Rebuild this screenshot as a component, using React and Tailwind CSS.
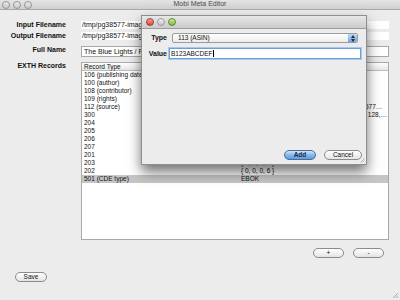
const records = [
  ["106 (publishing date)", "2012-01-19"],
  ["100 (author)", "Ronald Firbank"],
  ["108 (contributor)", "calibre (0.8.34) [http://calibre-ebook.com]"],
  ["109 (rights)", "Public domain in the USA."],
  ["112 (source)", "http://www.gutenberg.org/ebooks/38577/38577mobi"],
  ["300", "{ 0, 0, 0, 1, 0, 0, 0, 0, 0, 0, 0, 0, 0, 0, 0, 0, 0, 128, 0, 0, 0, 0 }"],
  ["204", "{ 0, 0, 0, 201 }"],
  ["205", "{ 0, 0, 0, 0 }"],
  ["206", "{ 0, 0, 0, 1 }"],
  ["207", "{ 0, 0, 0, 0 }"],
  ["201", "{ 0, 0, 0, 0 }"],
  ["203", "{ 0, 0, 0, 0 }"],
  ["202", "{ 0, 0, 0, 6 }"],
  ["501 (CDE type)", "EBOK"],
];

const Light = ({ className }) => (
  <span className={`block w-[8px] h-[8px] rounded-full border ${className}`} />
);

const AquaButton = ({ children, primary, className = "" }) => (
  <button
    className={`h-[10px] rounded-full border text-[6.5px] leading-[8px] flex items-center justify-center ${
      primary
        ? "border-[#4a6c9b] bg-gradient-to-b from-[#d3e6fa] via-[#86b8ec] to-[#5c9be0] font-bold text-[#1a2a40]"
        : "border-[#8a8a8a] bg-gradient-to-b from-[#ffffff] to-[#e4e4e4] text-[#111]"
    } ${className}`}
  >
    {children}
  </button>
);

export default function App() {
  return (
    <div
      className="relative w-[400px] h-[300px] overflow-hidden bg-[#ececec] text-[#111]"
      style={{ fontFamily: '"Liberation Sans", Arial, sans-serif' }}
    >
      {/* Main window title bar */}
      <div className="relative h-[10px] bg-gradient-to-b from-[#e4e4e4] to-[#d0d0d0] border-b border-[#a9a9a9] flex items-center">
        <div className="flex gap-[3px] pl-[2px]">
          <Light className="border-[#959595] bg-gradient-to-b from-[#ececec] to-[#c8c8c8]" />
          <Light className="border-[#959595] bg-gradient-to-b from-[#ececec] to-[#c8c8c8]" />
          <Light className="border-[#959595] bg-gradient-to-b from-[#ececec] to-[#c8c8c8]" />
        </div>
        <div className="absolute inset-0 flex items-center justify-center text-[7px] text-[#4a4a4a]">
          Mobi Meta Editor
        </div>
      </div>

      {/* Form */}
      <div className="flex mt-[11px] h-[8px] items-center">
        <div className="w-[66px] text-right font-bold text-[7px] leading-[8px]">Input Filename</div>
        <div className="ml-[15px] mr-[11px] flex-1 h-[8px] bg-white text-[7px] leading-[8px] pl-[1px] overflow-hidden whitespace-nowrap">
          /tmp/pg38577-images.epub
        </div>
      </div>
      <div className="flex mt-[3px] h-[8px] items-center">
        <div className="w-[66px] text-right font-bold text-[7px] leading-[8px]">Output Filename</div>
        <div className="ml-[15px] mr-[11px] flex-1 h-[8px] bg-white text-[7px] leading-[8px] pl-[1px] overflow-hidden whitespace-nowrap">
          /tmp/pg38577-images.mobi
        </div>
      </div>
      <div className="flex mt-[6px] h-[11px] items-start">
        <div className="w-[66px] text-right font-bold text-[7px] leading-[7px]">Full Name</div>
        <div className="ml-[15px] mr-[11px] flex-1 h-[11px] bg-white border border-[#a8a8a8] text-[7px] leading-[9px] pl-[2px] overflow-hidden whitespace-nowrap">
          The Blue Lights / Ronald Firbank
        </div>
      </div>

      <div className="flex mt-[5px]">
        <div className="w-[66px] text-right font-bold text-[7px] leading-[7px]">EXTH Records</div>
        <div className="ml-[15px] mr-[11px] flex-1 h-[178px] bg-white border border-[#a9a9a9] overflow-hidden">
          <div className="flex h-[8px] bg-gradient-to-b from-[#ffffff] to-[#e6e6e6] border-b border-[#bdbdbd] text-[6.5px] leading-[7px]">
            <div className="w-[157px] pl-[2px] border-r border-[#cfcfcf]">Record Type</div>
            <div className="flex-1 pl-[3px]">Value</div>
          </div>
          {records.map(([type, value], i) => (
            <div
              key={type}
              className={`flex h-[8px] text-[6.5px] leading-[8px] whitespace-nowrap ${
                i === records.length - 1 ? "bg-[#c6c6c6]" : ""
              }`}
            >
              <div className="w-[157px] pl-[2px] overflow-hidden">{type}</div>
              <div className="flex-1 min-w-0 pl-[2px] pr-[1px] truncate">{value}</div>
            </div>
          ))}
        </div>
      </div>

      <div className="flex justify-end gap-[9px] mt-[8px] mr-[16px]">
        <AquaButton className="w-[31px]">+</AquaButton>
        <AquaButton className="w-[31px]">-</AquaButton>
      </div>

      <div className="mt-[14px] ml-[15px]">
        <AquaButton className="w-[32px]">Save</AquaButton>
      </div>

      {/* Main window resize grip */}
      <svg className="absolute right-[1px] bottom-[1px]" width="7" height="7" viewBox="0 0 7 7">
        <path d="M6 1L1 6M6 3.5L3.5 6M6 5.5L5.5 6" stroke="#9a9a9a" strokeWidth="0.8" />
      </svg>

      {/* Add record dialog */}
      <div className="absolute left-[141px] top-[15px] w-[226px] h-[150px] bg-[#ececec] border border-[#8e8e8e] shadow-[0_7px_12px_rgba(0,0,0,0.55)] flex flex-col">
        <div className="h-[13px] bg-gradient-to-b from-[#e8e8e8] to-[#cbcbcb] border-b border-[#9c9c9c] flex items-center gap-[3px] pl-[4px]">
          <Light className="border-[#a33a33] bg-gradient-to-b from-[#f2a19a] to-[#d9443b]" />
          <Light className="border-[#9a9a9a] bg-gradient-to-b from-[#efefef] to-[#c6c6c6]" />
          <Light className="border-[#5c8a2e] bg-gradient-to-b from-[#c9eb9a] to-[#7cbf3e]" />
        </div>

        <div className="flex items-center mt-[4px] h-[10px]">
          <div className="w-[25px] text-right font-bold text-[7px] leading-[8px]">Type</div>
          <div className="ml-[5px] w-[186px] h-[10px] rounded-[2px] border border-[#9b9b9b] bg-gradient-to-b from-[#ffffff] to-[#ececec] flex items-center">
            <span className="flex-1 pl-[5px] text-[6.5px] leading-[8px]">113 (ASIN)</span>
            <span className="w-[9px] h-full rounded-r-[2px] bg-gradient-to-b from-[#c3dbf5] to-[#6fa4df] flex flex-col items-center justify-center gap-[1px]">
              <svg width="4" height="3" viewBox="0 0 4 3"><path d="M0 3L2 0L4 3Z" fill="#1e2e44" /></svg>
              <svg width="4" height="3" viewBox="0 0 4 3"><path d="M0 0L2 3L4 0Z" fill="#1e2e44" /></svg>
            </span>
          </div>
        </div>

        <div className="flex items-center mt-[5px] h-[11px]">
          <div className="w-[25px] text-right font-bold text-[7px] leading-[8px]">Value</div>
          <div className="ml-[2px] w-[192px] h-[11px] border border-[#6e9fd8] shadow-[0_0_0_1px_#a9c8ec] bg-white flex items-center pl-[1px]">
            <span className="text-[6.5px] leading-[8px]">B123ABCDEF</span>
            <span className="w-px h-[7px] bg-black" />
          </div>
        </div>

        <div className="flex-1" />
        <div className="flex justify-end gap-[8px] pr-[4px] pb-[4px]">
          <AquaButton primary className="w-[32px]">Add</AquaButton>
          <AquaButton className="w-[38px]">Cancel</AquaButton>
        </div>

        <svg className="absolute right-[1px] bottom-[1px]" width="5" height="5" viewBox="0 0 5 5">
          <path d="M4.5 0.5L0.5 4.5M4.5 2.5L2.5 4.5" stroke="#a0a0a0" strokeWidth="0.7" />
        </svg>
      </div>
    </div>
  );
}
